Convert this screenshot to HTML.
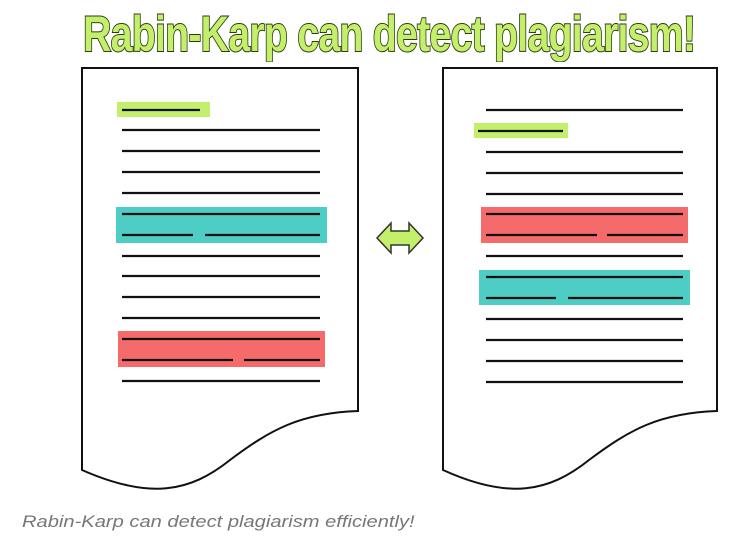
<!DOCTYPE html>
<html><head><style>
body{margin:0;width:750px;height:543px;background:#fff;overflow:hidden;position:relative;font-family:"Liberation Sans",sans-serif}
.t{position:absolute;left:83px;top:6px;font-family:"Liberation Sans Narrow","Liberation Sans",sans-serif;font-weight:bold;font-size:50px;line-height:56px;color:#c4ef6a;-webkit-text-stroke:2px #2e3a12;paint-order:stroke fill;white-space:nowrap;letter-spacing:-1px;transform-origin:left top}
.c{position:absolute;left:22px;top:512px;font-style:italic;color:#777;font-size:17px;white-space:nowrap;transform-origin:left top}
</style></head><body>
<svg width="750" height="543" style="position:absolute;left:0;top:0">
<g stroke="#111" stroke-width="2" fill="#fff">
<path d="M82 68 H358 V411 C300 413 270 430 230 460 C190 492 150 500 82 470 Z"/>
<path d="M443 68 H717 V411 C659 413 629 430 589 460 C549 492 509 500 443 470 Z"/>
</g>
<g stroke="none">
<rect x="117" y="102" width="93" height="15" fill="#c4ef6a"/>
<rect x="116" y="207" width="211" height="36" fill="#4ecdc4"/>
<rect x="118" y="331" width="207" height="36" fill="#f56b6b"/>
<rect x="474" y="123" width="94" height="15" fill="#c4ef6a"/>
<rect x="481" y="207" width="207" height="36" fill="#f56b6b"/>
<rect x="479" y="270" width="211" height="35" fill="#4ecdc4"/>
</g>
<g stroke="#111" stroke-width="2.2">
<path d="M122 110H200M122 130H320M122 151H320M122 172H320M122 193H320M122 214H320M122 235H193M205 235H320M122 256H320M122 276H320M122 297H320M122 318H320M122 339H320M122 360H233M244 360H320M122 381H320"/>
<path d="M486 110H683M478 131H563M486 152H683M486 173H683M486 194H683M486 214H683M486 235H597M607 235H683M486 256H683M486 277H683M486 298H556M568 298H683M486 319H683M486 340H683M486 361H683M486 382H683"/>
</g>
<path d="M377 238 L391 223 V231 H409 V223 L423 238 L409 253 V245 H391 V253 Z" fill="#c4ef6a" stroke="#333" stroke-width="1.5"/>
</svg>
<div class="t">Rabin-Karp can detect plagiarism!</div>
<div class="c">Rabin-Karp can detect plagiarism efficiently!</div>
<script>
var t=document.querySelector('.t');t.style.transform='scaleX('+(612/t.scrollWidth)+')';
var c=document.querySelector('.c');c.style.transform='scaleX('+(393/c.scrollWidth)+')';
</script>
</body></html>
